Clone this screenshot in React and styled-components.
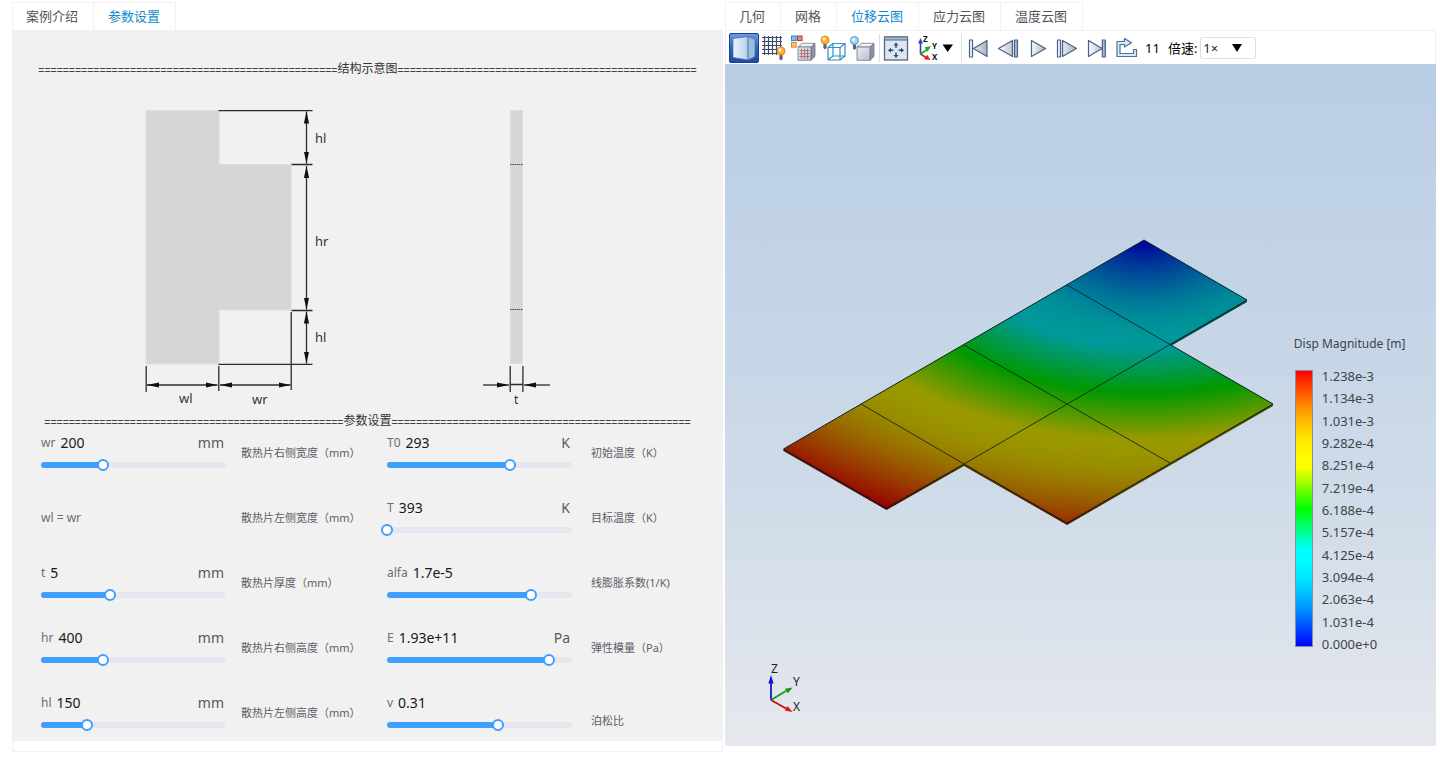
import React, { useState } from "react";
import styled, { createGlobalStyle } from "styled-components";

const GlobalStyle = createGlobalStyle`
  * { box-sizing: border-box; }
  body {
    margin: 0;
    background: #fff;
    color: #4e5156;
    font-family: "Noto Sans", "Noto Sans CJK SC", sans-serif;
    font-size: 13px;
  }
  button, input, select { font: inherit; color: inherit; }
`;

const Page = styled.main`
  display: grid;
  grid-template-columns: minmax(0, 1fr) minmax(0, 1fr);
  gap: 2px;
  align-items: start;
  padding: 2px 4px 4px 12px;
`;

const Column = styled.section`
  min-width: 0;
`;

const TabList = styled.div`
  display: flex;
  height: 28px;
`;

const Tab = styled.button`
  padding: 0 15px 2px 14px;
  border: solid #f2f2f4;
  border-width: 1px 1px 0 0;
  background: #fff;
  white-space: nowrap;
  line-height: 24px;
  color: ${(p) => (p.$active ? "#0f8acb" : "#515459")};
  &:first-child { border-left-width: 1px; padding-left: 13px; }
`;

const SetupPanel = styled.div`
  padding-bottom: 10px;
  border: solid #f1f1f3;
  border-width: 0 1px 1px;
`;

const SetupBody = styled.div`
  padding: 30px 0 5px;
  background: #f1f1f1;
`;

const RuleRow = styled.h2`
  display: flex;
  justify-content: center;
  margin: 0;
  height: 16px;
  line-height: 18px;
  font-size: 12px;
  font-weight: 400;
  color: #333;
  white-space: nowrap;
`;

const RuleMarks = styled.span`
  font-family: "Noto Sans CJK SC", sans-serif;
  font-size: 11px;
  color: #111;
`;

const Sketch = styled.svg`
  display: block;
  width: 100%;
  height: auto;
`;

const ParamGrid = styled.div`
  display: grid;
  grid-template-columns: 185fr 161fr 185fr 132fr;
  grid-auto-rows: 48px;
  row-gap: 17px;
  padding: 0 18px 0 28px;
`;

const Field = styled.div`
  padding-top: 4px;
`;

const FieldLine = styled.div`
  display: flex;
  align-items: center;
  gap: 5px;
  height: 20px;
  padding-right: 2px;
`;

const FieldName = styled.label`
  font-size: 12px;
  color: #6a6e75;
`;

const FieldInput = styled.input`
  flex: 1;
  min-width: 0;
  width: 0;
  height: 20px;
  padding: 0;
  border: 0;
  outline: 0;
  background: transparent;
  font-size: 14px;
  color: #16181b;
`;

const Unit = styled.span`
  font-size: 14px;
  color: #55585e;
`;

const SliderBox = styled.div`
  display: grid;
  align-items: center;
  height: 16px;
  margin-top: 5px;
`;

const Rail = styled.div`
  grid-area: 1 / 1;
  height: 6px;
  border-radius: 3px;
  overflow: hidden;
  background: #e4e7ed;
`;

const RailFill = styled.div`
  height: 100%;
  background: #409eff;
`;

const Range = styled.input`
  grid-area: 1 / 1;
  appearance: none;
  width: calc(100% + 12px);
  height: 16px;
  margin: 0 -6px;
  background: transparent;
  cursor: pointer;
  &::-webkit-slider-thumb {
    appearance: none;
    width: 12px;
    height: 12px;
    border: 2px solid #409eff;
    border-radius: 50%;
    background: #fff;
  }
`;

const Formula = styled.div`
  display: flex;
  align-items: center;
  font-size: 12px;
  color: #6a6e75;
`;

const Note = styled.div`
  display: flex;
  align-items: center;
  padding-left: ${(p) => (p.$wide ? 19 : 15)}px;
  padding-top: ${(p) => (p.$below ? 16 : 0)}px;
  font-size: 11px;
  color: #5c6067;
  white-space: nowrap;
`;

const Toolbar = styled.div`
  display: flex;
  align-items: center;
  height: 34px;
  padding: 0 3px;
  border: solid #ebeef5;
  border-width: 1px 1px 0;
`;

const ToolButton = styled.button`
  display: block;
  flex: none;
  padding: 0;
  border: 0;
  background: none;
  cursor: pointer;
  svg { display: block; }
`;

const Separator = styled.span`
  flex: none;
  width: 1px;
  height: 28px;
  margin-right: 1px;
  background: #dcdfe6;
`;

const FrameNumber = styled.output`
  margin-left: 2px;
  font-size: 13px;
  color: #000;
`;

const SpeedLabel = styled.label`
  margin: 0 3px 0 8px;
  font-size: 13px;
  color: #000;
`;

const SpeedBox = styled.div`
  display: grid;
  align-items: center;
  width: 56px;
  height: 22px;
  svg { grid-area: 1 / 1; justify-self: end; margin-right: 14px; pointer-events: none; }
`;

const SpeedSelect = styled.select`
  grid-area: 1 / 1;
  appearance: none;
  width: 100%;
  height: 100%;
  padding: 0 2px;
  border: 1px solid #dcdfe6;
  border-radius: 2px;
  background: #fff;
  color: #222;
`;

const Viewport = styled.div`
  position: relative;
  height: calc(100vh - 75px);
  min-height: 480px;
  background: linear-gradient(#b9cde5, #cddae8 60%, #e6e8ed);
`;

const ModelView = styled.svg`
  display: block;
  width: 100%;
  height: 100%;
`;

const Legend = styled.div`
  position: absolute;
  left: 80%;
  bottom: 94px;
  color: #404347;
`;

const LegendTitle = styled.div`
  line-height: 20px;
  margin-bottom: 14px;
  font-size: 12px;
  white-space: nowrap;
`;

const LegendBody = styled.div`
  display: flex;
  gap: 9px;
  height: 284px;
  padding-left: 1px;
`;

const ColourBar = styled.div`
  width: 18px;
  margin: 2px 0 5px;
  border: 1px solid #8c8c9c;
  background: linear-gradient(to top, ${(p) => p.$stops});
`;

const LegendValues = styled.ol`
  display: flex;
  flex-direction: column;
  justify-content: space-between;
  margin: 0;
  padding: 0;
  list-style: none;
  font-size: 13px;
  line-height: 16px;
`;

const Triad = styled.svg`
  position: absolute;
  left: 35px;
  bottom: 25px;
`;

/* Rainbow map from blue through cyan, green and yellow to red, eased between its knots. */
const colourAt = (t, shade) => {
  let rgb;
  if (t <= 0.35) rgb = [0, Math.sin((t / 0.35) * (Math.PI / 2)), 1];
  else if (t <= 0.5) rgb = [0, 1, (0.5 - t) / 0.15];
  else if (t <= 0.65) rgb = [(t - 0.5) / 0.15, 1, 0];
  else rgb = [1, Math.sin(((1 - t) / 0.35) * (Math.PI / 2)), 0];
  return `rgb(${rgb.map((c) => Math.round(c * 255 * shade)).join(",")})`;
};
const steps = Array.from({ length: 41 }, (_, i) => i / 40);
const barStops = steps.map((t) => `${colourAt(t, 1)} ${t * 100}%`).join(", ");

const RULE = "=".repeat(49);

const Rule = ({ children }) => (
  <RuleRow>
    <RuleMarks aria-hidden="true">{RULE}</RuleMarks>
    {children}
    <RuleMarks aria-hidden="true">{RULE}</RuleMarks>
  </RuleRow>
);

const Tabs = ({ items, initial }) => {
  const [active, setActive] = useState(initial);
  return (
    <TabList role="tablist">
      {items.map((t) => (
        <Tab key={t} type="button" role="tab" aria-selected={t === active} $active={t === active} onClick={() => setActive(t)}>
          {t}
        </Tab>
      ))}
    </TabList>
  );
};

const Param = ({ name, value, unit, percent }) => {
  const [text, setText] = useState(value);
  const [pos, setPos] = useState(percent);
  return (
    <Field>
      <FieldLine>
        <FieldName htmlFor={`p-${name}`}>{name}</FieldName>
        <FieldInput id={`p-${name}`} value={text} onChange={(e) => setText(e.target.value)} />
        {unit && <Unit>{unit}</Unit>}
      </FieldLine>
      <SliderBox>
        <Rail><RailFill style={{ width: `${pos}%` }} /></Rail>
        <Range type="range" min="0" max="100" step="any" aria-label={name} value={pos} onChange={(e) => setPos(Number(e.target.value))} />
      </SliderBox>
    </Field>
  );
};

const rows = [
  [{ name: "wr", value: "200", unit: "mm", percent: 33.3 }, "散热片右侧宽度（mm）", { name: "T0", value: "293", unit: "K", percent: 66.7 }, "初始温度（K）"],
  [null, "散热片左侧宽度（mm）", { name: "T", value: "393", unit: "K", percent: 0 }, "目标温度（K）"],
  [{ name: "t", value: "5", unit: "mm", percent: 37.5 }, "散热片厚度（mm）", { name: "alfa", value: "1.7e-5", percent: 77.8 }, "线膨胀系数(1/K)"],
  [{ name: "hr", value: "400", unit: "mm", percent: 33.3 }, "散热片右侧高度（mm）", { name: "E", value: "1.93e+11", unit: "Pa", percent: 87.5 }, "弹性模量（Pa）"],
  [{ name: "hl", value: "150", unit: "mm", percent: 25 }, "散热片左侧高度（mm）", { name: "v", value: "0.31", percent: 60 }, "泊松比"],
];

const StructureSketch = () => (
  <Sketch viewBox="13 76 709 336" role="img" aria-label="结构示意图">
    <defs>
      <marker id="tip" viewBox="0 0 12 6" refX="12" refY="3" markerWidth="12" markerHeight="6" markerUnits="userSpaceOnUse" orient="auto-start-reverse">
        <path d="M0 0.4 12 3 0 5.6z" fill="#111" />
      </marker>
    </defs>
    <path d="M146 110.500H219V164.500H291V310H219V364H146z" fill="#d6d6d6" stroke="#dedede" />
    <g stroke="#2b2b2b" strokeWidth="1.3" fill="none">
      <path d="M218.500 110.700H312.500M291.500 164.500H312.500M291.500 310.500H312.500M218.500 364.300H312.500" />
      <path d="M146.200 366V392M218.800 366V391M291.200 312V390" />
      <path d="M306.500 111.500V163.500" markerStart="url(#tip)" markerEnd="url(#tip)" />
      <path d="M306.500 166V309.500" markerStart="url(#tip)" markerEnd="url(#tip)" />
      <path d="M306.500 311.500V363.500" markerStart="url(#tip)" markerEnd="url(#tip)" />
      <path d="M147 385H217.500" markerStart="url(#tip)" markerEnd="url(#tip)" />
      <path d="M220 385H290.500" markerStart="url(#tip)" markerEnd="url(#tip)" />
    </g>
    <rect x="510.500" y="110.500" width="12" height="253" fill="#d6d6d6" stroke="#dedede" />
    <path d="M510 164.500H523M510 309.500H523" stroke="#444" strokeDasharray="1.500 .7" />
    <g stroke="#2b2b2b" strokeWidth="1.300">
      <path d="M510.200 366V392M522.900 366V392M510 384.500H523" />
      <path d="M483 385H509" markerEnd="url(#tip)" />
      <path d="M550 385H524" markerEnd="url(#tip)" />
    </g>
    <g fontSize="13" fill="#333">
      <text x="315" y="143">hl</text>
      <text x="315" y="246">hr</text>
      <text x="315" y="342">hl</text>
      <text x="179" y="403">wl</text>
      <text x="252" y="404">wr</text>
      <text x="514" y="404" fontSize="12">t</text>
    </g>
  </Sketch>
);

const Icon = ({ children, width = 30, left = 0 }) => (
  <svg width={width} height="30" viewBox={`${left} 0 ${width} 30`} fill="none">{children}</svg>
);

const Bulb = ({ x, y, fill, edge }) => (
  <g transform={`translate(${x} ${y})`}>
    <path d="M-1.600 3h3.200v5l-1.600 1.400-1.600-1.400z" fill="#59607a" />
    <circle r="4" fill={fill} stroke={edge} />
    <circle cx="-1" cy="-1" r="1.700" fill="#fff" opacity=".8" />
  </g>
);

const Block = ({ x }) => (
  <g transform={`translate(${x} 0)`} stroke="#6d7789" strokeWidth=".8" strokeLinejoin="round">
    <path d="M0 14 4.500 10.300H17L13 14z" fill="#f1f3f6" />
    <path d="M13 14 17 10.300V23.500L13 27.300z" fill="#8b95a5" />
    <path d="M0 14H13V27.300H0z" fill="url(#steel)" />
  </g>
);

const ShadedIcon = () => (
  <Icon>
    <defs>
      <linearGradient id="on" x2="0" y2="1"><stop stopColor="#6a9be8" /><stop offset=".5" stopColor="#2f66c8" /><stop offset="1" stopColor="#1c4aa8" /></linearGradient>
      <linearGradient id="glass" x2="1" y2="0"><stop stopColor="#eaf5fd" /><stop offset="1" stopColor="#b3d0e8" /></linearGradient>
      <linearGradient id="steel" x2="1" y2="1"><stop stopColor="#eceff3" /><stop offset="1" stopColor="#b7bfca" /></linearGradient>
      <linearGradient id="media" x2="1" y2="0"><stop stopColor="#fbfcfd" /><stop offset="1" stopColor="#a9b2be" /></linearGradient>
    </defs>
    <rect x=".5" y=".5" width="29" height="29" rx="1.500" fill="url(#on)" stroke="#1d3f8f" />
    <path d="M4 5.500 19 3.500V27L4 24.500z" fill="url(#glass)" stroke="#48699a" strokeWidth=".7" />
    <path d="M19 3.500 26 6.500V23.500L19 27z" fill="#9dbfdd" stroke="#48699a" strokeWidth=".7" />
  </Icon>
);

const MeshIcon = () => (
  <Icon>
    <path d="M3 4.500H23M3 8.500H23M3 12.500H23M3 16.500H19M3 20.500H18M5.500 3V22M9.500 3V22M13.500 3V22M17.500 3V22M21.500 3V14" stroke="#3a4c6e" strokeWidth="1.200" />
    <Bulb x={22} y={18} fill="#ffb02e" edge="#dd8a1c" />
  </Icon>
);

const ColourMeshIcon = () => (
  <Icon>
    <rect x="2.500" y="3" width="4.600" height="4.600" fill="#7cc4f2" stroke="#2f83bf" />
    <rect x="8.500" y="3" width="4.600" height="4.600" fill="#e08a8a" stroke="#b63f46" />
    <rect x="2.500" y="9.500" width="4.600" height="4.600" fill="#f9c182" stroke="#dd8424" />
    <Block x={9} />
    <path d="M10.500 17.500H20.500M10.500 20.500H20.500M10.500 23.500H20.500M12.500 15.500V26M15.500 15.500V26M18.500 15.500V26" stroke="#b5666c" strokeWidth=".9" />
  </Icon>
);

const WireIcon = () => (
  <Icon>
    <path d="M9 14.500H21V27H9zM14 10.500H26V23H14zM9 14.500 14 10.500M21 14.500 26 10.500M9 27 14 23M21 27 26 23" stroke="#2f92cc" strokeWidth="1.200" />
    <Bulb x={6} y={7} fill="#ffb02e" edge="#dd8a1c" />
  </Icon>
);

const SolidIcon = () => (
  <Icon>
    <Block x={8} />
    <Bulb x={5.500} y={7.500} fill="#9fd4f7" edge="#4a94c8" />
  </Icon>
);

const FitIcon = () => (
  <Icon>
    <rect x="3.500" y="4" width="23" height="23" fill="#dde5ee" stroke="#54698c" strokeWidth="1.300" />
    <path d="M3.500 4H26.500V7H3.500z" fill="#a9b9cf" stroke="#54698c" />
    <g fill="#2b4672">
      <path d="M15 9.500 17.500 12.500H12.500zM15 25 17.500 22H12.500zM7 17.300 10 14.800V19.800zM23 17.300 20 14.800V19.800z" />
      <path d="M14.300 12.500h1.400v2.500h-1.400zM14.300 19.500h1.400v2.500h-1.400zM10 16.600h2.500v1.400H10zM17.500 16.600h2.500v1.400H17.500z" />
    </g>
  </Icon>
);

const AxesIcon = () => (
  <Icon width={50} left={-5}>
    <path d="M4.500 21V9" stroke="#2546c8" strokeWidth="1.600" />
    <path d="M4.500 5 2 10.500H7z" fill="#2546c8" />
    <path d="M4.500 21 11 16.500" stroke="#16b022" strokeWidth="1.600" />
    <path d="M15 13 8.500 14.500 11.500 18.800z" fill="#16b022" />
    <path d="M4.500 21 10 24.500" stroke="#e02020" strokeWidth="1.600" />
    <path d="M14.500 27 11.200 21.800 8 26.300z" fill="#e02020" />
    <g fontSize="8" fontWeight="700" fill="#111">
      <text x="7" y="9">Z</text>
      <text x="16" y="16">Y</text>
      <text x="16" y="27">X</text>
    </g>
    <path d="M26.500 11.500H37L31.700 19z" fill="#000" />
  </Icon>
);

const Media = ({ children }) => (
  <Icon>
    <g fill="url(#media)" stroke="#46618c" strokeWidth="1.200" strokeLinejoin="round">{children}</g>
  </Icon>
);

const Playback = () => (
  <>
    <ToolButton type="button" aria-label="第一帧"><Media><path d="M6.500 7H9.500V24H6.500zM24 7.500V23.500L10.500 15.500z" /></Media></ToolButton>
    <ToolButton type="button" aria-label="上一帧"><Media><path d="M19.500 7.500V23.500L5.500 15.500zM21.500 7H24.500V24H21.500z" /></Media></ToolButton>
    <ToolButton type="button" aria-label="播放"><Media><path d="M8.500 7.500V23.500L22.500 15.500z" /></Media></ToolButton>
    <ToolButton type="button" aria-label="下一帧"><Media><path d="M4.500 7H7.500V24H4.500zM9.500 7.500V23.500L23.500 15.500z" /></Media></ToolButton>
    <ToolButton type="button" aria-label="最后一帧"><Media><path d="M5.500 7.500V23.500L19 15.500zM19.300 7H22.300V24H19.300z" /></Media></ToolButton>
    <ToolButton type="button" aria-label="循环">
      <Icon>
        <path d="M11.500 5.500 18.500 9.800 11.500 14V11.500H7V20.500H20.500V16.500H23.500V23.500H4V8.500H11.500z" fill="#dbe9f5" stroke="#46729f" strokeWidth="1.200" strokeLinejoin="round" />
      </Icon>
    </ToolButton>
  </>
);

const PLATE = "M1144 240 1247 300 1170 344.500 1273 404 1067 523 964 464 886.500 508 783.500 449z";

const Model = () => (
  <ModelView viewBox="725 64 711 682" role="img" aria-label="位移云图">
    <defs>
      {[["top", 0.6], ["side", 0.32]].map(([id, shade]) => (
        <radialGradient key={id} id={id} gradientUnits="userSpaceOnUse" cx="0" cy="0" r="728" gradientTransform="matrix(.515 .298 -.515 .298 1144 240)">
          {steps.map((t) => <stop key={t} offset={t} stopColor={colourAt(t, shade)} />)}
        </radialGradient>
      ))}
    </defs>
    <path d={PLATE} transform="translate(0 1.500)" fill="url(#side)" stroke="url(#side)" strokeWidth="1" />
    <path d={PLATE} fill="url(#top)" stroke="#10201c" strokeWidth="1" />
    <path d="M1067 285 1170 344.500 964 464 861 404M964 345 1170 463" fill="none" stroke="#0b2418" strokeWidth="1" strokeOpacity=".85" />
  </ModelView>
);

const AxisTriad = () => (
  <Triad width="50" height="60" viewBox="760 661 50 60" aria-hidden="true">
    <path d="M771 700V682" stroke="#1616c8" strokeWidth="1.800" />
    <path d="M771 675 768.300 683.500H773.700z" fill="#1414e0" />
    <path d="M771 700 786 691" stroke="#12a012" strokeWidth="1.800" />
    <path d="M792.500 687.500 785 688.800 787.800 693.200z" fill="#129012" />
    <path d="M771 700 786 708.500" stroke="#c80c0c" strokeWidth="1.800" />
    <path d="M792.500 712 787.500 706 784.800 710.500z" fill="#e01010" />
    <g fontSize="12" fill="#222">
      <text x="771" y="673">Z</text>
      <text x="793" y="686">Y</text>
      <text x="793" y="711">X</text>
    </g>
  </Triad>
);

const legendValues = ["1.238e-3", "1.134e-3", "1.031e-3", "9.282e-4", "8.251e-4", "7.219e-4", "6.188e-4", "5.157e-4", "4.125e-4", "3.094e-4", "2.063e-4", "1.031e-4", "0.000e+0"];

export default function App() {
  return (
    <>
      <GlobalStyle />
      <Page>
        <Column>
          <Tabs items={["案例介绍", "参数设置"]} initial="参数设置" />
          <SetupPanel>
            <SetupBody>
              <Rule>结构示意图</Rule>
              <StructureSketch />
              <Rule>参数设置</Rule>
              <ParamGrid>
                {rows.map(([left, leftNote, right, rightNote], i) => (
                  <React.Fragment key={right.name}>
                    {left ? <Param {...left} /> : <Formula>wl = wr</Formula>}
                    <Note>{leftNote}</Note>
                    <Param {...right} />
                    <Note $wide $below={i === rows.length - 1}>{rightNote}</Note>
                  </React.Fragment>
                ))}
              </ParamGrid>
            </SetupBody>
          </SetupPanel>
        </Column>
        <Column>
          <Tabs items={["几何", "网格", "位移云图", "应力云图", "温度云图"]} initial="位移云图" />
          <Toolbar>
            <ToolButton type="button" aria-label="着色"><ShadedIcon /></ToolButton>
            <ToolButton type="button" aria-label="网格显示"><MeshIcon /></ToolButton>
            <ToolButton type="button" aria-label="网格着色"><ColourMeshIcon /></ToolButton>
            <ToolButton type="button" aria-label="线框"><WireIcon /></ToolButton>
            <ToolButton type="button" aria-label="实体"><SolidIcon /></ToolButton>
            <Separator />
            <ToolButton type="button" aria-label="适应窗口"><FitIcon /></ToolButton>
            <ToolButton type="button" aria-label="视图方向"><AxesIcon /></ToolButton>
            <Separator />
            <Playback />
            <FrameNumber>11</FrameNumber>
            <SpeedLabel htmlFor="speed">倍速:</SpeedLabel>
            <SpeedBox>
              <SpeedSelect id="speed" defaultValue="1">
                <option value="1">1×</option>
                <option value="2">2×</option>
              </SpeedSelect>
              <svg width="10" height="8" viewBox="0 0 10 8" aria-hidden="true"><path d="M0 0H10L5 8z" /></svg>
            </SpeedBox>
          </Toolbar>
          <Viewport>
            <Model />
            <Legend>
              <LegendTitle>Disp Magnitude [m]</LegendTitle>
              <LegendBody>
                <ColourBar $stops={barStops} />
                <LegendValues>{legendValues.map((v) => <li key={v}>{v}</li>)}</LegendValues>
              </LegendBody>
            </Legend>
            <AxisTriad />
          </Viewport>
        </Column>
      </Page>
    </>
  );
}
